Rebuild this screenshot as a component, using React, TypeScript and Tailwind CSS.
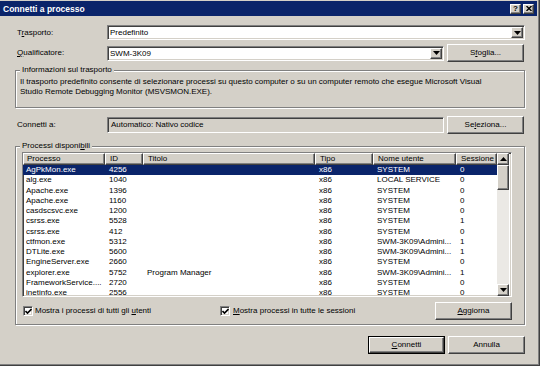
import React from 'react';

const raised =
  'bg-[#d4d0c8] border border-t-white border-l-white border-r-[#404040] border-b-[#404040] shadow-[inset_-1px_-1px_0_#808080]';
const sunken =
  'border border-t-[#808080] border-l-[#808080] border-r-white border-b-white shadow-[inset_1px_1px_0_#404040,inset_-1px_-1px_0_#d4d0c8]';
const etched = 'border border-[#808080] shadow-[inset_1px_1px_0_white,1px_1px_0_white]';

const cols = [
  { label: 'Processo', w: 'w-[82px] pl-[3px]' },
  { label: 'ID', w: 'w-[38px] pl-[4px]' },
  { label: 'Titolo', w: 'w-[172px] pl-[4px]' },
  { label: 'Tipo', w: 'w-[58px] pl-[4px]' },
  { label: 'Nome utente', w: 'w-[83px] pl-[4px]' },
  { label: 'Sessione', w: 'w-[41px] pl-[4px]' },
];

const rows: string[][] = [
  ['AgPkMon.exe', '4256', '', 'x86', 'SYSTEM', '0'],
  ['alg.exe', '1040', '', 'x86', 'LOCAL SERVICE', '0'],
  ['Apache.exe', '1396', '', 'x86', 'SYSTEM', '0'],
  ['Apache.exe', '1160', '', 'x86', 'SYSTEM', '0'],
  ['casdscsvc.exe', '1200', '', 'x86', 'SYSTEM', '0'],
  ['csrss.exe', '5528', '', 'x86', 'SYSTEM', '1'],
  ['csrss.exe', '412', '', 'x86', 'SYSTEM', '0'],
  ['ctfmon.exe', '5312', '', 'x86', 'SWM-3K09\\Admini...', '1'],
  ['DTLite.exe', '5600', '', 'x86', 'SWM-3K09\\Admini...', '1'],
  ['EngineServer.exe', '2660', '', 'x86', 'SYSTEM', '0'],
  ['explorer.exe', '5752', 'Program Manager', 'x86', 'SWM-3K09\\Admini...', '1'],
  ['FrameworkService....', '2720', '', 'x86', 'SYSTEM', '0'],
  ['inetinfo.exe', '2556', '', 'x86', 'SYSTEM', '0'],
];

const Arrow = ({ up = false }: { up?: boolean }) => (
  <svg width="7" height="4" viewBox="0 0 7 4">
    <polygon points={up ? '0,4 7,4 3.5,0' : '0,0 7,0 3.5,4'} fill="black" />
  </svg>
);

const Combo = ({ text, w }: { text: string; w: string }) => (
  <div className={`${w} h-[15px] bg-white flex items-center ${sunken}`}>
    <span className="flex-1 pl-[2px] leading-[11px]">{text}</span>
    <div className={`w-[12px] h-[11px] mr-px flex items-center justify-center ${raised}`}>
      <Arrow />
    </div>
  </div>
);

const Btn = ({ children, def = false }: { children: React.ReactNode; def?: boolean }) => (
  <div className={def ? 'border border-black' : ''}>
    <div className={`${def ? 'w-[75px] h-[16px]' : 'w-[77px] h-[18px]'} flex items-center justify-center ${raised}`}>
      {children}
    </div>
  </div>
);

const Check = () => (
  <div className={`w-[10px] h-[10px] bg-white flex items-center justify-center ${sunken}`}>
    <svg width="7" height="7" viewBox="0 0 7 7">
      <path d="M0.5 3 L2.5 5 L6.5 1" stroke="black" strokeWidth="1.6" fill="none" />
    </svg>
  </div>
);

const App = () => {
  return (
    <div className="w-[540px] h-[366px] bg-[#d4d0c8] overflow-hidden text-[8px] leading-[10px] text-black font-['Liberation_Sans',Arial,sans-serif] pt-px shadow-[inset_-1px_-1px_0_#404040,inset_-2px_-2px_0_#808080]">
      {/* title bar */}
      <div className="mr-[3px] h-[15px] bg-[#0a246a] flex items-center pl-[3px] pr-[3px]">
        <span className="text-white font-bold text-[8.5px]">Connetti a processo</span>
        <div className="ml-auto flex gap-[2px]">
          <div className={`w-[11px] h-[10px] flex items-center justify-center font-bold text-[8px] leading-none ${raised}`}>?</div>
          <div className={`w-[11px] h-[10px] flex items-center justify-center ${raised}`}>
            <svg width="6" height="5" viewBox="0 0 6 5">
              <path d="M0.5 0 L5.5 5 M5.5 0 L0.5 5" stroke="black" strokeWidth="1.4" />
            </svg>
          </div>
        </div>
      </div>

      <div className="mt-[9px] pl-[17px] flex items-center h-[15px]">
        <span className="w-[90px]">T<u>r</u>asporto:</span>
        <Combo text="Predefinito" w="w-[418px]" />
      </div>

      <div className="mt-[4px] pl-[17px] flex items-center h-[18px]">
        <span className="w-[90px]"><u>Q</u>ualificatore:</span>
        <Combo text="SWM-3K09" w="w-[337px]" />
        <div className="ml-[3px]">
          <Btn>S<u>f</u>oglia...</Btn>
        </div>
      </div>

      <div className={`relative mt-[8px] ml-[15px] w-[510px] h-[38px] ${etched}`}>
        <span className="absolute -top-[6px] left-[4px] px-[2px] bg-[#d4d0c8]">Informazioni sul trasporto</span>
        <div className="pt-[6px] pl-[4px] whitespace-nowrap">
          Il trasporto predefinito consente di selezionare processi su questo computer o su un computer remoto che esegue Microsoft Visual
          <br />
          Studio Remote Debugging Monitor (MSVSMON.EXE).
        </div>
      </div>

      <div className="mt-[8px] pl-[17px] flex items-center h-[18px]">
        <span className="w-[90px]">Connetti a:</span>
        <div className={`w-[337px] h-[16px] flex items-center pl-[3px] ${sunken}`}>Automatico: Nativo codice</div>
        <div className="ml-[3px]">
          <Btn>Se<u>l</u>eziona...</Btn>
        </div>
      </div>

      <div className={`relative mt-[12px] ml-[15px] w-[510px] h-[179px] ${etched}`}>
        <span className="absolute -top-[6px] left-[4px] px-[2px] bg-[#d4d0c8]">
          Processi disponi<u>b</u>ili
        </span>

        <div className={`mt-[5px] ml-[6px] w-[490px] h-[145px] bg-white flex overflow-hidden ${sunken}`}>
          <div className="w-[474px] flex flex-col">
            <div className="flex h-[12px] shrink-0">
              {cols.map((c) => (
                <div
                  key={c.label}
                  className={`${c.w} h-[12px] flex items-center whitespace-nowrap overflow-hidden ${raised}`}
                >
                  {c.label}
                </div>
              ))}
            </div>
            <div className="flex-1 overflow-hidden">
              {rows.map((r, i) => (
                <div
                  key={i}
                  className={`flex h-[10.25px] leading-[10.25px] ${i === 0 ? 'bg-[#0a246a] text-white' : ''}`}
                >
                  {r.map((v, j) => (
                    <div key={j} className={`${cols[j].w} whitespace-nowrap overflow-hidden`}>
                      {v}
                    </div>
                  ))}
                </div>
              ))}
            </div>
          </div>
          <div className="w-[12px] flex flex-col">
            <div className={`h-[12px] flex items-center justify-center shrink-0 ${raised}`}>
              <Arrow up />
            </div>
            <div className={`h-[25px] shrink-0 ${raised}`} />
            <div className="flex-1 bg-[#ebe9e5]" />
            <div className={`h-[12px] flex items-center justify-center shrink-0 ${raised}`}>
              <Arrow />
            </div>
          </div>
        </div>

        <div className="mt-[5px] pl-[7px] pr-[12px] flex items-center h-[18px]">
          <div className="w-[197px] flex items-center gap-[2px]">
            <Check />
            <span>Mostra i processi di tutti gli <u>u</u>tenti</span>
          </div>
          <div className="flex items-center gap-[3px]">
            <Check />
            <span><u>M</u>ostra processi in tutte le sessioni</span>
          </div>
          <div className="ml-auto">
            <Btn><u>A</u>ggiorna</Btn>
          </div>
        </div>
      </div>

      <div className="mt-[11px] pr-[15px] flex justify-end gap-[3px]">
        <Btn def><u>C</u>onnetti</Btn>
        <Btn>Annulla</Btn>
      </div>
    </div>
  );
};

export default App;
